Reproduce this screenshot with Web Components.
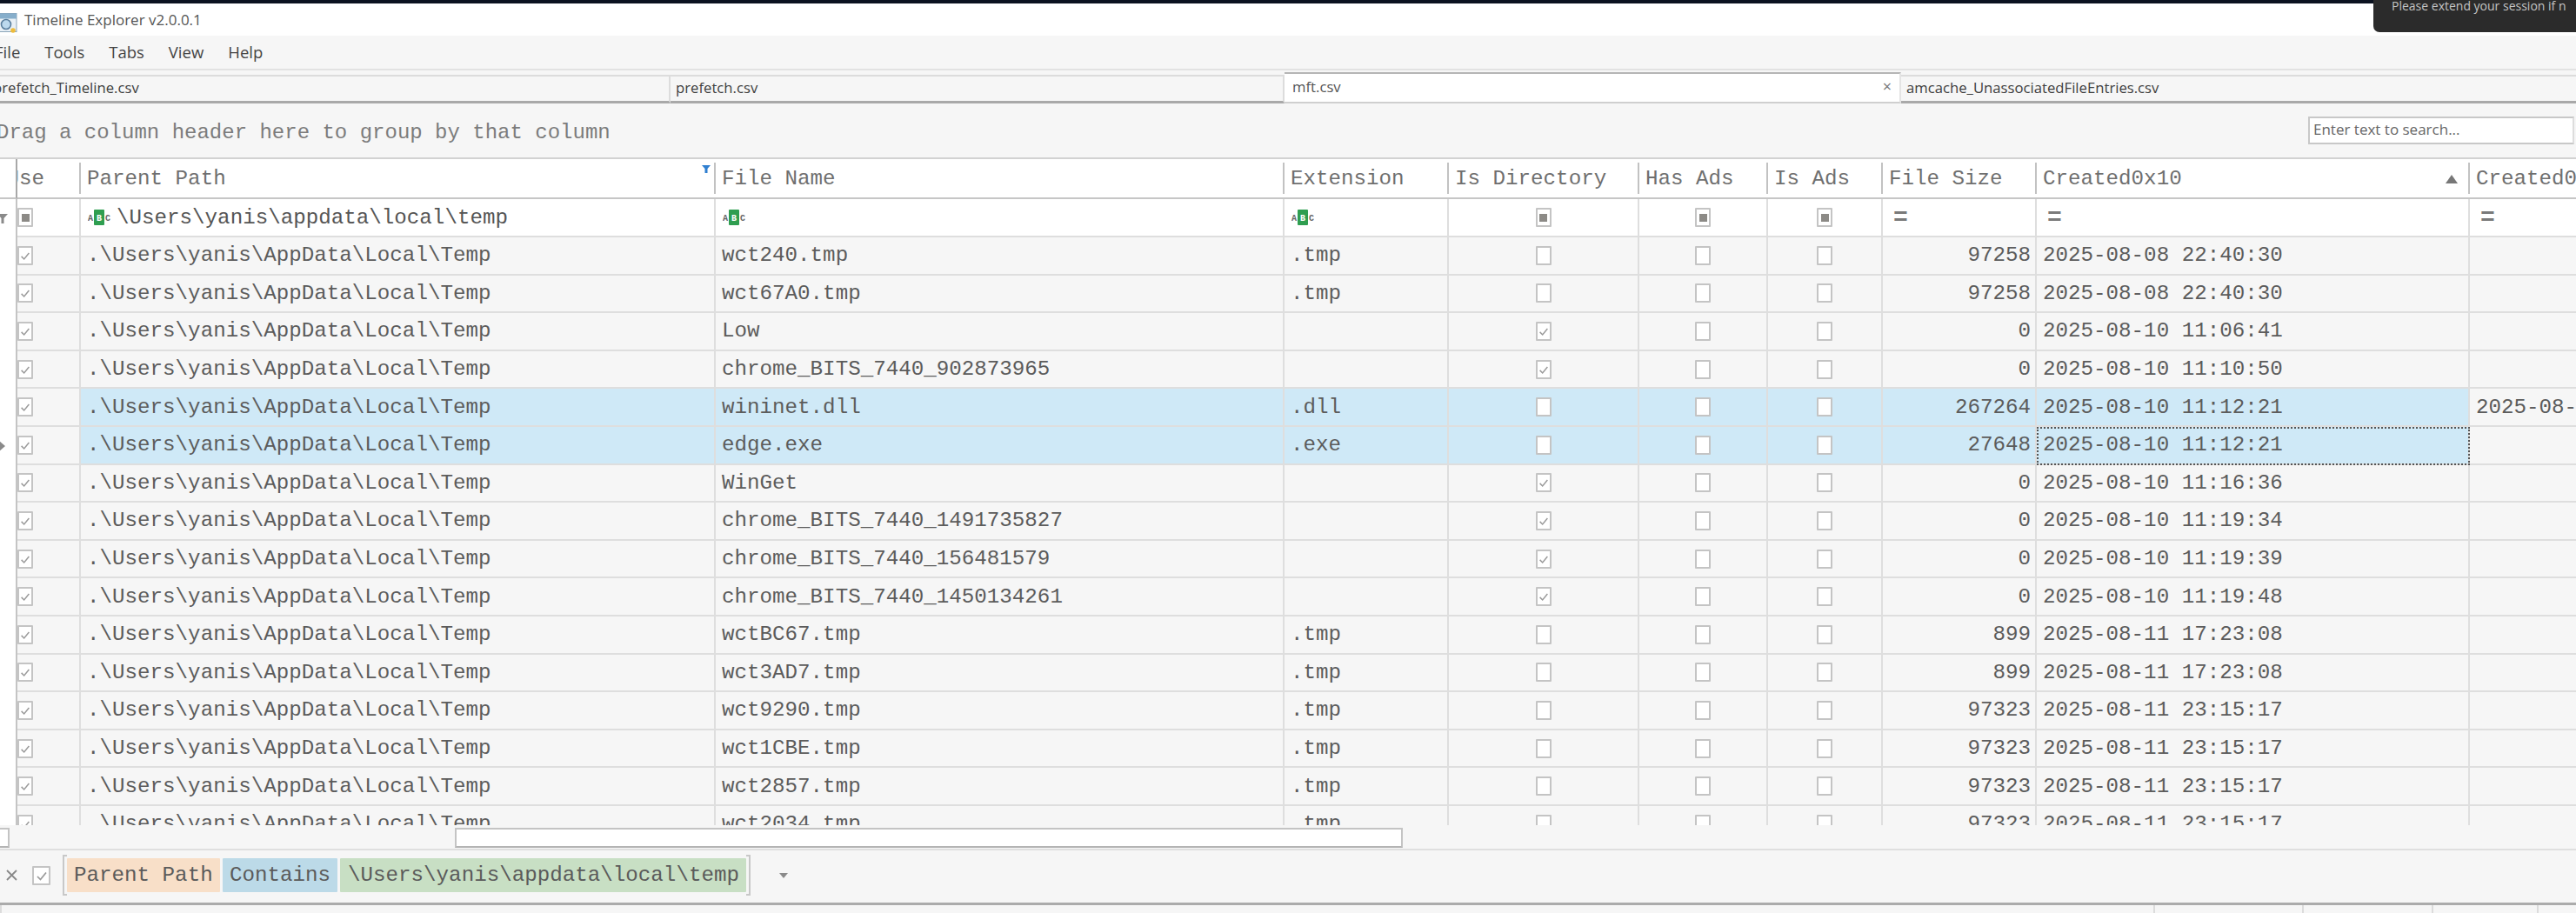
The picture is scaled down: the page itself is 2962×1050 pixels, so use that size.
<!DOCTYPE html>
<html>
<head>
<meta charset="utf-8">
<title>Timeline Explorer</title>
<style>
  html, body { margin: 0; padding: 0; background: #f6f6f6; overflow: hidden; }
  body { font-family: "Open Sans", "Liberation Sans", sans-serif; color: #4a4a4a; }
</style>
</head>
<body>
<te-app></te-app>
<script>
const MONO = '"Liberation Mono", "DejaVu Sans Mono", monospace';
const UI = '"Open Sans", "Liberation Sans", sans-serif';

class teCheck extends HTMLElement {
  constructor() {
    super();
    this.shadow = this.attachShadow({ mode: 'open' });
  }

  connectedCallback() {
    const state = this.getAttribute('state');
    let mark = '';
    if (state === 'checked') {
      mark = '<svg width="16" height="20" viewBox="0 0 16 20"><path d="M3 11 L6.5 14.5 L13 6.5" fill="none" stroke="#9a9a9a" stroke-width="1.7"/></svg>';
    }
    if (state === 'mixed') {
      mark = '<span class="square"></span>';
    }
    this.shadow.innerHTML = `
      <style>
        :host {
          display: inline-flex;
          box-sizing: border-box;
          width: 18px;
          height: 22px;
          background: #fff;
          border: 2px solid #c4c4c4;
          border-radius: 1px;
          align-items: center;
          justify-content: center;
        }
        svg { display: block; }
        .square { width: 9px; height: 9px; background: #8c8a86; }
      </style>
      ${mark}
    `;
  }
}

class teAbc extends HTMLElement {
  constructor() {
    super();
    this.shadow = this.attachShadow({ mode: 'open' });
    this.shadow.innerHTML = `
      <style>
        :host { display: inline-block; width: 26px; height: 18px; }
        svg { display: block; }
        text { font-family: ${MONO}; font-size: 10px; font-weight: bold; }
      </style>
      <svg width="26" height="18" viewBox="0 0 26 18">
        <rect x="7" y="0" width="12" height="18" rx="1" fill="#2f9e50"/>
        <text x="0" y="13" fill="#666">A</text>
        <text x="10" y="13" fill="#fff">B</text>
        <text x="20" y="13" fill="#666">C</text>
      </svg>
    `;
  }
}

class teTab extends HTMLElement {
  constructor() {
    super();
    this.shadow = this.attachShadow({ mode: 'open' });
    this.shadow.innerHTML = `
      <style>
        :host {
          display: flex;
          box-sizing: border-box;
          align-items: center;
          height: 33px;
          padding: 0 6px 4px;
          font: 16.7px ${UI};
          color: #3f3f3f;
          border-top: 2px solid #dcdcdc;
          border-right: 2px solid #dcdcdc;
          border-bottom: 3px solid #a9a9a9;
          white-space: nowrap;
          overflow: hidden;
        }
        :host([active]) {
          height: 36px;
          background: #fff;
          color: #555;
          border-top: 2px solid #b5b5b5;
          border-bottom: 2px solid #cfcfcf;
          border-right: 2px solid #e4e4e4;
          justify-content: space-between;
          padding: 0 9px 4px;
        }
        :host([last]) { border-right: none; flex: 1; }
      </style>
      <slot></slot>
      <slot name="close"></slot>
    `;
  }
}

class teMenu extends HTMLElement {
  constructor() {
    super();
    this.shadow = this.attachShadow({ mode: 'open' });
    this.shadow.innerHTML = `
      <style>
        :host {
          display: flex;
          box-sizing: border-box;
          height: 40px;
          padding-bottom: 2px;
          margin-left: -6px;
          gap: 28px;
          align-items: center;
          font: 18.5px ${UI};
          color: #444;
          background: #f6f6f6;
          border-bottom: 2px solid #e2e2e2;
        }
      </style>
      <span>File</span><span>Tools</span><span>Tabs</span><span>View</span><span>Help</span>
    `;
  }
}

class teTitlebar extends HTMLElement {
  constructor() {
    super();
    this.shadow = this.attachShadow({ mode: 'open' });
    this.shadow.innerHTML = `
      <style>
        :host {
          display: flex;
          box-sizing: border-box;
          height: 37px;
          align-items: center;
          gap: 8px;
          background: #fff;
          font: 17px ${UI};
          color: #555;
        }
        svg { display: block; flex: none; margin-top: 7px; }
      </style>
      <svg width="20" height="23" viewBox="0 0 20 23">
        <rect x="-2" y="0.5" width="21" height="21" fill="#e9f0f6" stroke="#8aa4b8"/>
        <rect x="-2" y="0.5" width="21" height="6" fill="#86aecb"/>
        <circle cx="7" cy="13" r="5.5" fill="#bcd9ee" stroke="#5b7f9e" stroke-width="1.6"/>
        <circle cx="15" cy="20" r="2.8" fill="#eebc3c"/>
      </svg>
      <span><slot></slot></span>
    `;
  }
}

class teToast extends HTMLElement {
  constructor() {
    super();
    this.shadow = this.attachShadow({ mode: 'open' });
    this.shadow.innerHTML = `
      <style>
        :host {
          position: absolute;
          top: 0;
          left: 2729px;
          width: 233px;
          height: 37px;
          box-sizing: border-box;
          padding-left: 21px;
          background: #2b2b2b;
          border-bottom-left-radius: 7px;
          color: #c4c4c4;
          font: 14px/14px ${UI};
          white-space: nowrap;
          overflow: hidden;
        }
      </style>
      <slot></slot>
    `;
  }
}

class teGroupBar extends HTMLElement {
  constructor() {
    super();
    this.shadow = this.attachShadow({ mode: 'open' });
    this.shadow.innerHTML = `
      <style>
        :host {
          display: flex;
          box-sizing: border-box;
          height: 62px;
          padding: 15px 2px 0 0;
          justify-content: space-between;
          align-items: flex-start;
          background: #f6f6f6;
        }
        .hint {
          margin: 3px 0 0 -4px;
          font: 24px/32px ${MONO};
          color: #7c7c7c;
          white-space: pre;
        }
        .search {
          box-sizing: border-box;
          width: 306px;
          height: 32px;
          padding-left: 4px;
          background: #fff;
          border: 2px solid #c8c8c8;
          border-right-color: #ddd;
          font: 17px/26px ${UI};
          color: #666;
        }
      </style>
      <span class="hint">Drag a column header here to group by that column</span>
      <div class="search">Enter text to search...</div>
    `;
  }
}

const columns = '20px 73px 730px 654px 189px 219px 148px 132px 177px 498px 122px';

const rows = [
  ['wct240.tmp', '.tmp', 0, '97258', '2025-08-08 22:40:30'],
  ['wct67A0.tmp', '.tmp', 0, '97258', '2025-08-08 22:40:30'],
  ['Low', '', 1, '0', '2025-08-10 11:06:41'],
  ['chrome_BITS_7440_902873965', '', 1, '0', '2025-08-10 11:10:50'],
  ['wininet.dll', '.dll', 0, '267264', '2025-08-10 11:12:21', 'selected', '2025-08-'],
  ['edge.exe', '.exe', 0, '27648', '2025-08-10 11:12:21', 'selected focused'],
  ['WinGet', '', 1, '0', '2025-08-10 11:16:36'],
  ['chrome_BITS_7440_1491735827', '', 1, '0', '2025-08-10 11:19:34'],
  ['chrome_BITS_7440_156481579', '', 1, '0', '2025-08-10 11:19:39'],
  ['chrome_BITS_7440_1450134261', '', 1, '0', '2025-08-10 11:19:48'],
  ['wctBC67.tmp', '.tmp', 0, '899', '2025-08-11 17:23:08'],
  ['wct3AD7.tmp', '.tmp', 0, '899', '2025-08-11 17:23:08'],
  ['wct9290.tmp', '.tmp', 0, '97323', '2025-08-11 23:15:17'],
  ['wct1CBE.tmp', '.tmp', 0, '97323', '2025-08-11 23:15:17'],
  ['wct2857.tmp', '.tmp', 0, '97323', '2025-08-11 23:15:17'],
  ['wct2034.tmp', '.tmp', 0, '97323', '2025-08-11 23:15:17'],
];

class teGrid extends HTMLElement {
  constructor() {
    super();
    this.shadow = this.attachShadow({ mode: 'open' });
  }

  generateHeader() {
    const titles = ['File Name', 'Extension', 'Is Directory', 'Has Ads', 'Is Ads', 'File Size'];
    let html = `
      <div class="row header">
        <div class="cell indicator"></div>
        <div class="cell use"><span>Use</span></div>
        <div class="cell title">Parent Path
          <svg class="funnel" width="10" height="9" viewBox="0 0 10 9"><path d="M0 0 H10 L6.5 4 V9 H3.5 V4 Z" fill="#2f7fd0"/></svg>
        </div>
    `;
    titles.forEach((title) => {
      html += `<div class="cell title">${title}</div>`;
    });
    html += `
        <div class="cell title">Created0x10
          <svg class="arrow" width="14" height="10" viewBox="0 0 14 10"><path d="M7 0 L14 10 H0 Z" fill="#777"/></svg>
        </div>
        <div class="cell title last">Created0</div>
      </div>
    `;
    return html;
  }

  generateFilterRow() {
    return `
      <div class="row filter">
        <div class="cell indicator"><svg width="9" height="11" viewBox="0 0 9 11"><path d="M-3 0 H9 L4.5 5 V11 H1.5 V5 Z" fill="#8a8a8a"/></svg></div>
        <div class="cell box"><te-check state="mixed"></te-check></div>
        <div class="cell text"><te-abc></te-abc><span class="term">\\Users\\yanis\\appdata\\local\\temp</span></div>
        <div class="cell text"><te-abc></te-abc></div>
        <div class="cell text"><te-abc></te-abc></div>
        <div class="cell center"><te-check state="mixed"></te-check></div>
        <div class="cell center"><te-check state="mixed"></te-check></div>
        <div class="cell center"><te-check state="mixed"></te-check></div>
        <div class="cell text"><span class="eq">=</span></div>
        <div class="cell text"><span class="eq">=</span></div>
        <div class="cell text last"><span class="eq">=</span></div>
      </div>
    `;
  }

  generateRows() {
    let html = '';
    rows.forEach((row) => {
      const [name, ext, isDir, size, created, flags = '', next = ''] = row;
      const selected = flags.includes('selected') ? 'on' : '';
      const focused = flags.includes('focused') ? 'focused' : '';
      html += `
        <div class="row data">
          <div class="cell indicator">${focused ? '<svg width="6" height="12" viewBox="0 0 6 12"><path d="M-1 0 L6 6 L-1 12 Z" fill="#8a8a8a"/></svg>' : ''}</div>
          <div class="cell box"><te-check state="checked"></te-check></div>
          <div class="cell text ${selected}">.\\Users\\yanis\\AppData\\Local\\Temp</div>
          <div class="cell text ${selected}">${name}</div>
          <div class="cell text ${selected}">${ext}</div>
          <div class="cell center ${selected}"><te-check state="${isDir ? 'checked' : 'empty'}"></te-check></div>
          <div class="cell center ${selected}"><te-check state="empty"></te-check></div>
          <div class="cell center ${selected}"><te-check state="empty"></te-check></div>
          <div class="cell text num ${selected}">${size}</div>
          <div class="cell text ${selected} ${focused}">${created}</div>
          <div class="cell text last">${next}</div>
        </div>
      `;
    });
    return html;
  }

  connectedCallback() {
    this.shadow.innerHTML = `
      <style>
        :host {
          display: block;
          height: 768px;
          overflow: hidden;
          background: #fff;
          border-top: 2px solid #d2d2d2;
          box-sizing: border-box;
          font: 24.2px ${MONO};
          color: #5c5c5c;
        }
        .row {
          display: grid;
          grid-template-columns: ${columns};
          box-sizing: border-box;
          height: 43.6px;
          white-space: nowrap;
        }
        .cell {
          box-sizing: border-box;
          display: flex;
          align-items: center;
          overflow: hidden;
          border-right: 2px solid #dedede;
          border-bottom: 2px solid #dedede;
        }
        .cell.last { border-right: none; }
        .indicator { border-right: 2px solid #c4c4c4; border-bottom: none; background: #fff; }
        .header { height: 46px; background: #fff; }
        .header .cell { border-right: none; border-bottom: 2px solid #c6c6c6; position: relative; }
        .header .indicator { border-right: 2px solid #a8a8a8; }
        .header .cell::after {
          content: '';
          position: absolute;
          right: 0;
          top: 4px;
          bottom: 4px;
          width: 2px;
          background: #c2c2c2;
        }
        .header .indicator::after, .header .last::after { display: none; }
        .title { padding-left: 7px; color: #6f6f6f; }
        .use span { margin-left: -12.6px; color: #6f6f6f; }
        .funnel { position: absolute; right: 6px; top: 7px; }
        .arrow { position: absolute; right: 14px; top: 18px; }
        .filter { background: #fff; height: 44px; }
        .data { background: #f6f6f6; }
        .data .text { padding-left: 7px; }
        .filter .text { padding-left: 8px; }
        .term { margin-left: 7px; color: #555; }
        .eq { margin-left: 4px; font-size: 28px; color: #7a7a7a; font-weight: bold; }
        .box { justify-content: flex-start; }
        .center { justify-content: center; }
        .data .num { justify-content: flex-end; padding: 0 5px 0 0; }
        .on { background: #cfe9f7; }
        .focused { outline: 2px dotted #555; outline-offset: -2px; }
      </style>
      ${this.generateHeader()}
      ${this.generateFilterRow()}
      ${this.generateRows()}
    `;
  }
}

class teScrollbar extends HTMLElement {
  constructor() {
    super();
    this.shadow = this.attachShadow({ mode: 'open' });
    this.shadow.innerHTML = `
      <style>
        :host {
          display: flex;
          box-sizing: border-box;
          height: 29px;
          padding-top: 3px;
          align-items: flex-start;
          background: #f6f6f6;
          border-bottom: 2px solid #dfdfdf;
        }
        .thumb {
          box-sizing: border-box;
          height: 23px;
          background: #fff;
          border: 2px solid #c4c4c4;
          border-bottom-color: #b4b4b4;
        }
        .small { width: 11px; border-left: none; }
        .large { width: 1090px; margin-left: 512px; }
      </style>
      <div class="thumb small"></div>
      <div class="thumb large"></div>
    `;
  }
}

class teChip extends HTMLElement {
  constructor() {
    super();
    this.shadow = this.attachShadow({ mode: 'open' });
    this.shadow.innerHTML = `
      <style>
        :host {
          display: flex;
          align-items: center;
          box-sizing: border-box;
          flex: none;
          height: 39px;
          padding: 0 8px;
          border-radius: 1px;
          background: var(--chip-color);
          font-family: ${MONO};
          font-size: 24.2px;
          color: #5b5b5b;
          white-space: pre;
        }
        .label { display: block; position: relative; }
      </style>
      <span class="label"><slot></slot></span>
    `;
  }
}

class teFilterBar extends HTMLElement {
  constructor() {
    super();
    this.shadow = this.attachShadow({ mode: 'open' });
    this.shadow.innerHTML = `
      <style>
        :host {
          display: flex;
          box-sizing: border-box;
          height: 63px;
          padding-bottom: 3px;
          align-items: center;
          background: #f6f6f6;
          border-bottom: 3px solid #ababab;
        }
        .remove { display: block; margin-left: 7px; }
        te-check { margin-left: 17px; width: 21px; }
        .group {
          display: flex;
          margin-left: 14px;
          gap: 3px;
          align-items: center;
        }
        .tick {
          box-sizing: border-box;
          width: 5px;
          height: 47px;
          border: 2px solid #c8c8c8;
        }
        .open { border-right: none; margin-right: -3px; }
        .shut { border-left: none; margin-left: -3px; }
        .drop { display: block; margin-left: 33px; }
      </style>
      <svg class="remove" width="13" height="13" viewBox="0 0 13 13"><path d="M1 1 L12 12 M12 1 L1 12" stroke="#888" stroke-width="1.8"/></svg>
      <te-check state="checked"></te-check>
      <div class="group">
        <div class="tick open"></div>
        <te-chip style="--chip-color:#f8dfc8; width: 176px">Parent Path</te-chip>
        <te-chip style="--chip-color:#bcdae8; width: 132px">Contains</te-chip>
        <te-chip style="--chip-color:#c8dfc4; width: 467px; padding-left: 9px">\\Users\\yanis\\appdata\\local\\temp</te-chip>
        <div class="tick shut"></div>
      </div>
      <svg class="drop" width="10" height="6" viewBox="0 0 10 6"><path d="M0 0 H10 L5 6 Z" fill="#8a8a8a"/></svg>
    `;
  }
}

class teStatusBar extends HTMLElement {
  constructor() {
    super();
    this.shadow = this.attachShadow({ mode: 'open' });
    this.shadow.innerHTML = `
      <style>
        :host {
          display: grid;
          grid-template-columns: 1fr 171px 149px 121px 45px;
          height: 10px;
          background: #f6f6f6;
        }
        div { border-left: 2px solid #dcdcdc; }
        div:first-child { border-left: none; }
      </style>
      <div></div><div></div><div></div><div></div><div></div>
    `;
  }
}

class teApp extends HTMLElement {
  constructor() {
    super();
    this.shadow = this.attachShadow({ mode: 'open' });
    this.shadow.innerHTML = `
      <style>
        :host {
          display: block;
          position: relative;
          width: 2962px;
          height: 1050px;
          overflow: hidden;
          background: #f6f6f6;
        }
        .top { height: 4px; background: #0b1220; }
        .strip {
          display: flex;
          box-sizing: border-box;
          height: 38px;
          padding-top: 1px;
          align-items: flex-end;
          background: #f6f6f6;
        }
        .first { width: 785px; margin-left: -14px; flex: none; }
        .second { width: 706px; flex: none; }
        .third { width: 709px; flex: none; }
        .x { color: #777; font-size: 18px; }
      </style>
      <div class="top"></div>
      <te-titlebar>Timeline Explorer v2.0.0.1</te-titlebar>
      <te-menu></te-menu>
      <div class="strip">
        <te-tab class="first">prefetch_Timeline.csv</te-tab>
        <te-tab class="second">prefetch.csv</te-tab>
        <te-tab class="third" active>mft.csv<span slot="close" class="x">×</span></te-tab>
        <te-tab last>amcache_UnassociatedFileEntries.csv</te-tab>
      </div>
      <te-group-bar></te-group-bar>
      <te-grid></te-grid>
      <te-scrollbar></te-scrollbar>
      <te-filter-bar></te-filter-bar>
      <te-status-bar></te-status-bar>
      <te-toast>Please extend your session if n</te-toast>
    `;
  }
}

customElements.define('te-check', teCheck);
customElements.define('te-abc', teAbc);
customElements.define('te-tab', teTab);
customElements.define('te-menu', teMenu);
customElements.define('te-titlebar', teTitlebar);
customElements.define('te-toast', teToast);
customElements.define('te-group-bar', teGroupBar);
customElements.define('te-grid', teGrid);
customElements.define('te-scrollbar', teScrollbar);
customElements.define('te-chip', teChip);
customElements.define('te-filter-bar', teFilterBar);
customElements.define('te-status-bar', teStatusBar);
customElements.define('te-app', teApp);
</script>
</body>
</html>
